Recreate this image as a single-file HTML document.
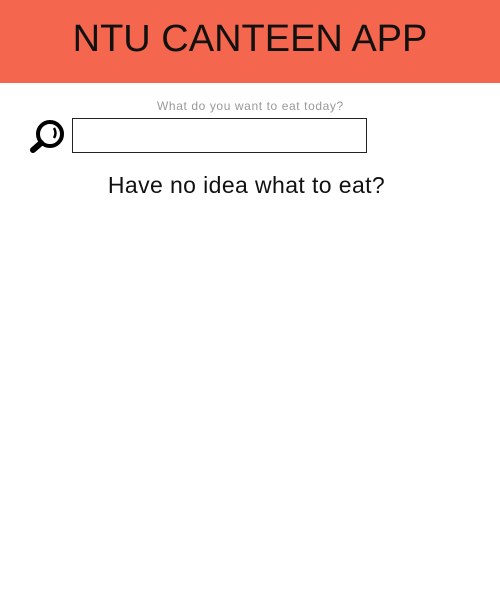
<!DOCTYPE html>
<html><head><style>
body{margin:0;width:500px;height:600px;background:#fff;font-family:"Liberation Sans",sans-serif;position:relative;overflow:hidden}
.h{position:absolute;left:0;top:0;width:500px;height:83px;background:#f4664d}
.h div{position:absolute;left:0;width:500px;top:18px;text-align:center;font-size:38px;color:#111;font-weight:300}
.q{position:absolute;left:157px;top:99px;font-size:12px;color:#999;letter-spacing:0.6px}
.box{position:absolute;left:72px;top:118px;width:293px;height:33px;border:1px solid #222}
.t{position:absolute;left:0;width:493px;text-align:center;top:172px;font-size:23px;color:#111;letter-spacing:0.4px}
</style></head><body>
<div class="h"><div>NTU CANTEEN APP</div></div>
<div class="q">What do you want to eat today?</div>
<svg style="position:absolute;left:28px;top:117px" width="40" height="38" viewBox="0 0 40 38">
<circle cx="22" cy="17" r="12" fill="none" stroke="#000" stroke-width="4"/>
<line x1="13" y1="26" x2="5" y2="33" stroke="#000" stroke-width="6" stroke-linecap="round"/>
<path d="M26 11 Q29 16 26 21" fill="none" stroke="#000" stroke-width="2.5"/>
</svg>
<div class="box"></div>
<div class="t">Have no idea what to eat?</div>
</body></html>
